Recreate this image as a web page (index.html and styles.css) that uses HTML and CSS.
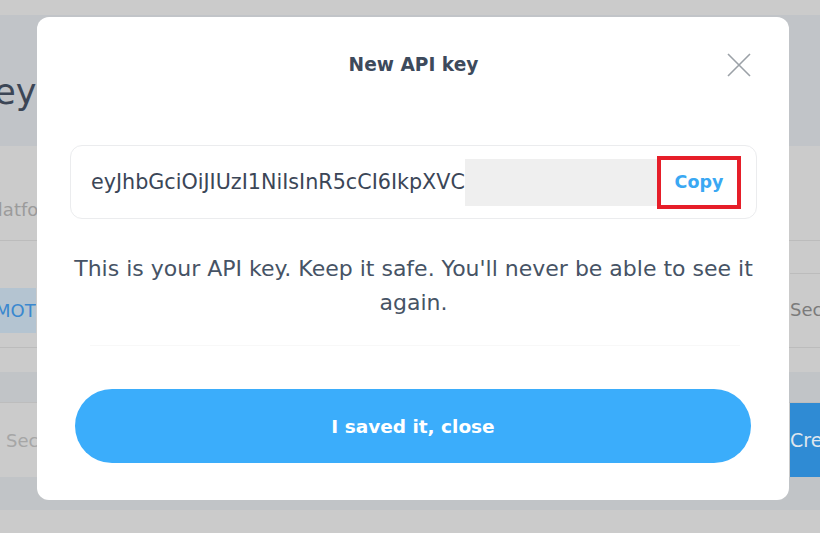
FILE: index.html
```html
<!DOCTYPE html>
<html lang="en">
<head>
<meta charset="utf-8">
<title>New API key</title>
<link rel="stylesheet" href="styles.css">
</head>
<body>
<div class="page">
  <div class="topbar"></div>
  <header class="hero"><h1 class="hero-title">Keys</h1></header>
  <section class="table">
    <div class="row row-head"><span class="cell-label">Platform</span></div>
    <div class="row row-item">
      <div class="col-left"><span class="badge">MOTO</span></div>
      <div class="col-right">
        <div class="sub-line"></div>
        <span class="cell-muted">Secret</span>
      </div>
    </div>
    <div class="row row-gap"></div>
  </section>
  <div class="band"></div>
  <div class="toolbar">
    <span class="search">Secret</span>
    <span class="create">Create</span>
  </div>
  <div class="band band-low"></div>
  <div class="foot"></div>
</div>

<div class="modal" role="dialog" aria-labelledby="modal-title">
  <div class="modal-head">
    <h2 id="modal-title" class="modal-title">New API key</h2>
    <button class="close" aria-label="Close">
      <svg width="24" height="24" viewBox="0 0 24 24"><path d="M1 1 L23 23 M23 1 L1 23" stroke="#9ba1a7" stroke-width="1.6" fill="none"/></svg>
    </button>
  </div>
  <div class="key-box">
    <span class="key-text">eyJhbGciOiJIUzI1NiIsInR5cCI6IkpXVC</span>
    <span class="key-mask"></span>
    <button class="copy">Copy</button>
  </div>
  <p class="note">This is your API key. Keep it safe. You'll never be able to see it again.</p>
  <div class="divider"></div>
  <button class="primary">I saved it, close</button>
</div>
</body>
</html>
```
FILE: styles.css
```css
* { box-sizing: border-box; }
html, body { margin: 0; padding: 0; }
body {
  width: 820px;
  height: 533px;
  overflow: hidden;
  position: relative;
  background: #cbcbcb;
  font-family: "DejaVu Sans", "Open Sans", sans-serif;
}
.page { width: 820px; }
.topbar { height: 15px; background: #cbcbcb; }
.hero {
  height: 131px;
  background: #c1c4c8;
  display: flex;
  align-items: center;
}
.hero-title {
  margin: 0 0 0 -27px;
  font-size: 35px;
  font-weight: 400;
  color: #3c4656;
  padding-top: 22px;
}
.table { background: #cbcbcb; }
.row { border-bottom: 1px solid #bcbcbc; }
.row-head {
  height: 95px;
  display: flex;
  align-items: flex-end;
  padding-bottom: 20px;
}
.cell-label {
  margin-left: -13px;
  font-size: 18px;
  color: #9b9b9b;
}
.row-item {
  height: 107px;
  display: flex;
  justify-content: space-between;
}
.col-left { padding-top: 47px; }
.badge {
  display: block;
  width: 56px;
  height: 45px;
  margin-left: -20px;
  padding-left: 15px;
  line-height: 45px;
  background: #b4c4d1;
  color: #3a88cf;
  font-size: 18px;
  overflow: hidden;
}
.col-right { width: 30px; overflow: hidden; }
.sub-line { height: 33px; border-bottom: 1px solid #bcbcbc; }
.cell-muted {
  display: block;
  margin-top: 25px;
  font-size: 18px;
  color: #7b7b7b;
  white-space: nowrap;
}
.row-gap { height: 24px; border-bottom: none; }
.band { height: 30px; background: #c1c4c7; }
.band-low { height: 33px; }
.toolbar {
  height: 75px;
  display: flex;
  justify-content: space-between;
  align-items: stretch;
  border-top: 1px solid #bdbdbd;
  background: #cbcbcb;
}
.search {
  padding-left: 6px;
  align-self: center;
  font-size: 18px;
  color: #a6a6a6;
}
.create {
  width: 30px;
  display: flex;
  align-items: center;
  background: #2f8bd4;
  color: #dfe6ee;
  font-size: 19px;
  overflow: hidden;
  white-space: nowrap;
}
.foot { height: 23px; background: #cbcbcb; }

/* modal overlay */
.modal {
  position: absolute;
  left: 37px;
  top: 17px;
  width: 752px;
  height: 483px;
  background: #ffffff;
  border-radius: 12px;
  padding: 0 32px 0 33px;
  display: flex;
  flex-direction: column;
}
.modal-head {
  height: 98px;
  display: flex;
  align-items: center;
  justify-content: center;
  position: relative;
}
.modal-title {
  margin: 0 0 4px;
  font-size: 18.6px;
  font-weight: 700;
  color: #3d4a5c;
}
.close {
  position: absolute;
  right: 6px;
  top: 36px;
  width: 24px;
  height: 24px;
  padding: 0;
  border: 0;
  background: none;
  display: flex;
}
.key-box {
  margin-top: 30px;
  height: 74px;
  border: 1px solid #ebecee;
  border-radius: 12px;
  display: flex;
  align-items: center;
  padding: 0 15px 0 20px;
}
.key-text {
  font-size: 20.7px;
  color: #3b4657;
  white-space: nowrap;
}
.key-mask {
  flex: 1;
  height: 47px;
  background: #efefef;
}
.copy {
  width: 84px;
  height: 53px;
  border: 4px solid #e61e29;
  background: #fff;
  color: #3aa8f3;
  font-family: inherit;
  font-size: 17.5px;
  font-weight: 600;
  padding: 0;
}
.note {
  margin: 33px 0 0;
  text-align: center;
  font-size: 22px;
  line-height: 34px;
  color: #465365;
}
.divider {
  margin: 25px 17px 0 20px;
  height: 1px;
  background: #f8f8f8;
}
.primary {
  margin: 43px 6px 0 5px;
  height: 74px;
  border: 0;
  border-radius: 37px;
  background: #3badfb;
  color: #ffffff;
  font-family: inherit;
  font-size: 18.5px;
  font-weight: 700;
}
```
